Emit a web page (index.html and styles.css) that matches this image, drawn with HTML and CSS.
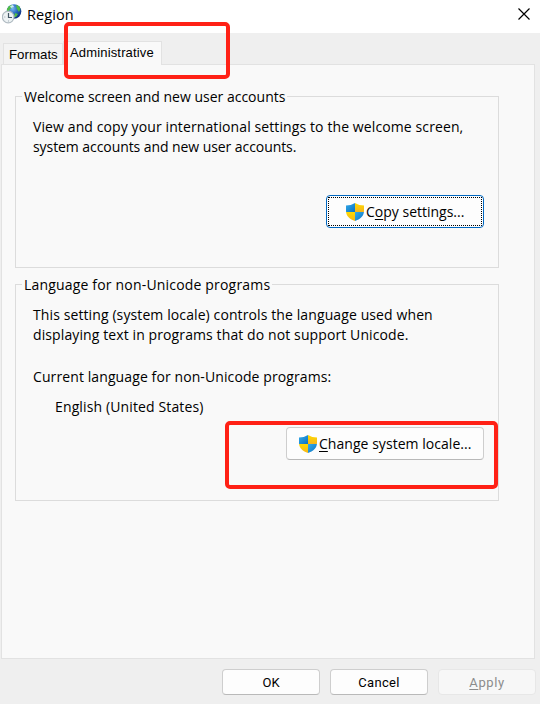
FILE: index.html
```html
<!DOCTYPE html>
<html lang="en">
<head>
<meta charset="utf-8">
<title>Region</title>
<link rel="stylesheet" href="styles.css">
</head>
<body>
<svg width="0" height="0" class="defs" aria-hidden="true">
  <defs>
    <linearGradient id="blue" x1="0" y1="0" x2="1" y2="1"><stop offset="0" stop-color="#36ace8"/><stop offset="1" stop-color="#0871c5"/></linearGradient>
    <linearGradient id="gold" x1="0" y1="0" x2="0" y2="1"><stop offset="0" stop-color="#ffda00"/><stop offset="1" stop-color="#f5b51c"/></linearGradient>
    <clipPath id="shield-shape"><path d="M0 2.5Q5 2.5 9 0Q13 2.5 18 2.5V8C18 13 14 16.500 9 18C4 16.500 0 13 0 8Z"/></clipPath>
    <symbol id="shield" viewBox="0 0 18 18">
      <g clip-path="url(#shield-shape)">
        <path fill="url(#blue)" d="M0 0H9V9H0Z"/><path fill="url(#gold)" d="M9 0H18V9H9Z"/>
        <path fill="url(#gold)" d="M0 9H9V18H0Z"/><path fill="url(#blue)" d="M9 9H18V18H9Z"/>
      </g>
    </symbol>
  </defs>
</svg>
<div class="window">
  <header class="titlebar">
    <svg class="app-icon" viewBox="0 0 20 20">
      <defs><radialGradient id="globe" cx=".4" cy=".3" r=".75"><stop offset="0" stop-color="#79b9ed"/><stop offset=".5" stop-color="#2465bd"/><stop offset="1" stop-color="#092576"/></radialGradient></defs>
      <circle cx="12" cy="7.500" r="7.300" fill="url(#globe)"/>
      <path fill="#52bd45" d="M14 1Q17 1 18.500 5L17 8L15 5ZM5 5Q7 1 10 1L11 3L8 5L7 7H5ZM13 9L16 10L14 13H12Z"/>
      <path fill="#c7e8f7" d="M8 2L11 1L12 3L9 4Z"/>
      <circle cx="6.200" cy="13" r="5.800" fill="#edf2f4" stroke="#b0bbc2" stroke-width="1.200"/>
      <path fill="none" stroke="#435665" stroke-width="1.200" d="M6.500 9V13.500H10"/>
      <path stroke="#8998a2" stroke-width=".8" d="M2.300 13H3.300M6.500 16.500V17.500"/>
    </svg>
    <h1 class="title">Region</h1>
    <svg class="close" viewBox="0 0 12 12"><path d="M.5 .5L11.500 11.500M11.500 .5L.5 11.500"/></svg>
  </header>
  <nav class="tabs">
    <span class="tab tab-formats">Formats</span>
    <span class="tab tab-active">Administrative</span>
  </nav>
  <main class="panel">
    <section class="group group-welcome">
      <h2 class="legend">Welcome screen and new user accounts</h2>
      <p class="copy">View and copy your international settings to the welcome screen,<br><span class="tight">system accounts and new user accounts.</span></p>
      <button class="button button-focus"><svg class="shield"><use href="#shield"/></svg><span>C<u>o</u>py settings...</span></button>
    </section>
    <section class="group group-language">
      <h2 class="legend legend-wide">Language for non-Unicode programs</h2>
      <p class="copy">This setting (system locale) controls the language used when<br>displaying text in programs that do not support Unicode.</p>
      <p class="current">Current language for non-Unicode programs:</p>
      <p class="locale">English (United States)</p>
      <button class="button button-locale"><svg class="shield"><use href="#shield"/></svg><span><u>C</u>hange system locale...</span></button>
    </section>
  </main>
  <footer class="actions">
    <button class="action">OK</button>
    <button class="action">Cancel</button>
    <button class="action" disabled><u>A</u>pply</button>
  </footer>
  <div class="highlight highlight-tab"></div>
  <div class="highlight highlight-locale"></div>
</div>
</body>
</html>
```

FILE: styles.css
```css
* { box-sizing: border-box; }
body { margin: 0; background: #efefef; font-family: "Open Sans", "Noto Sans", sans-serif; font-size: 14px; color: #000; }
h1, h2, p { margin: 0; font-weight: 400; font-size: 14px; }
.defs { position: absolute; }
.window { position: relative; display: flex; flex-direction: column; width: 540px; height: 704px; overflow: hidden; }
.titlebar { display: flex; height: 33px; padding: 4px 10px 0 2px; background: #fff; }
.app-icon { width: 20px; height: 20px; }
.title { margin-left: 5px; line-height: 22px; font-size: 14.500px; letter-spacing: .1px; }
.close { width: 12px; height: 12px; margin: 4px 0 0 auto; fill: none; stroke: #000; stroke-width: 1.200; }
.tabs { display: flex; align-items: flex-end; height: 32px; padding-left: 3px; font-family: "Liberation Sans", sans-serif; font-size: 13px; }
.tab { border: 1px solid #e2e2e2; border-bottom: 0; white-space: nowrap; }
.tab-formats { width: 60px; height: 22px; padding-left: 5px; background: #f3f3f3; line-height: 21px; font-size: 13.300px; }
.tab-active { z-index: 1; width: 99px; height: 24px; padding-left: 6px; background: #f9f9f9; line-height: 21px; letter-spacing: .16px; }
.panel { width: 534px; height: 595px; margin: -1px 0 0 1px; padding: 31px 0 0 13px; border: 1px solid #e2e2e2; background: #f9f9f9; }
.group { display: flex; flex-direction: column; width: 484px; border: 1px solid #dcdcdc; }
.group-welcome { height: 172px; }
.group-language { height: 217px; margin-top: 16px; }
.legend { align-self: flex-start; height: 20px; margin: -10px 0 0 6px; padding: 0 2px; background: #f9f9f9; line-height: 20px; white-space: nowrap; }
.legend-wide { letter-spacing: .18px; }
.copy { margin: 10px 0 0 17px; line-height: 20px; letter-spacing: .105px; white-space: nowrap; }
.tight { letter-spacing: -.07px; }
.current { margin: 22px 0 0 17px; line-height: 20px; letter-spacing: .1px; }
.locale { margin: 10px 0 0 39px; line-height: 20px; letter-spacing: .13px; }
.button { position: relative; display: flex; align-items: center; height: 33px; padding: 0 0 0 12px; margin: 10px 14px 0 auto; border: 1px solid #cecece; border-bottom-color: #b9b9b9; border-radius: 4px; background: #fdfdfd; color: #000; font: 14px "Open Sans", sans-serif; white-space: nowrap; }
.button-focus { width: 158px; margin-top: 38px; padding-left: 19px; border-color: #0067c0; }
.button-focus::after { content: ""; position: absolute; inset: 1px; border: 1px dotted #000; }
.button-locale { width: 198px; letter-spacing: .04px; }
.shield { flex: none; width: 18px; height: 18px; margin-right: 2px; }
u { text-underline-offset: 2px; text-decoration-thickness: 1px; text-decoration-skip-ink: none; }
.actions { display: flex; justify-content: flex-end; gap: 10px; padding: 10px 4px 0 0; }
.action { width: 98px; height: 26px; padding: 0; border: 1px solid #cecece; border-bottom-color: #b9b9b9; border-radius: 4px; background: #fdfdfd; color: #000; font: 13px Roboto, sans-serif; letter-spacing: .35px; }
.action:first-child { letter-spacing: 0; }
.action:disabled { border-color: #e7e7e7; background: #f7f7f7; color: #8c8c8c; letter-spacing: .6px; }
.highlight { position: absolute; z-index: 2; border: 4px solid #ff2116; border-radius: 5px; pointer-events: none; }
.highlight-tab { left: 64px; top: 22px; width: 166px; height: 57px; }
.highlight-locale { left: 225px; top: 421px; width: 273px; height: 68px; }
```
